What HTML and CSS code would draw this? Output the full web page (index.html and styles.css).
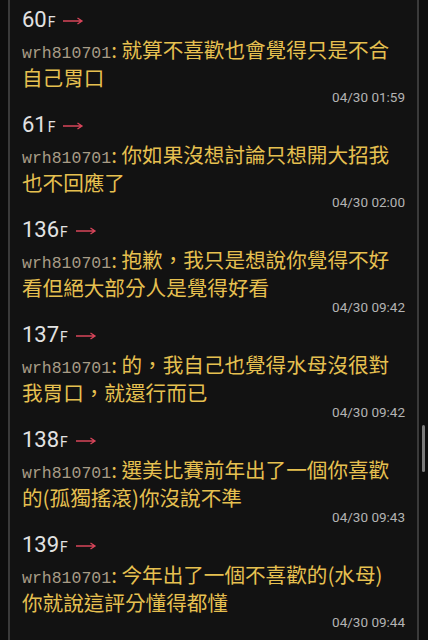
FILE: index.html
```html
<!DOCTYPE html>
<html lang="zh-Hant">
<head>
<meta charset="UTF-8">
<meta name="viewport" content="width=device-width, initial-scale=1.0">
<title>推文</title>
<link rel="stylesheet" href="styles.css">
</head>
<body>
<div class="page">
    <div class="push-list">
        <div class="push">
            <div class="floor">60<span class="floor-f">F</span><svg class="arrow" width="22" height="10" viewBox="0 0 22 10"><path d="M1 5 H20 M15.5 2 L20 5 L15.5 8" fill="none" stroke="currentColor" stroke-width="1.3"/></svg></div>
            <div class="content"><span class="user">wrh810701</span>: 就算不喜歡也會覺得只是不合自己胃口</div>
            <div class="time">04/30 01:59</div>
        </div>
        <div class="push">
            <div class="floor">61<span class="floor-f">F</span><svg class="arrow" width="22" height="10" viewBox="0 0 22 10"><path d="M1 5 H20 M15.5 2 L20 5 L15.5 8" fill="none" stroke="currentColor" stroke-width="1.3"/></svg></div>
            <div class="content"><span class="user">wrh810701</span>: 你如果沒想討論只想開大招我也不回應了</div>
            <div class="time">04/30 02:00</div>
        </div>
        <div class="push">
            <div class="floor">136<span class="floor-f">F</span><svg class="arrow" width="22" height="10" viewBox="0 0 22 10"><path d="M1 5 H20 M15.5 2 L20 5 L15.5 8" fill="none" stroke="currentColor" stroke-width="1.3"/></svg></div>
            <div class="content"><span class="user">wrh810701</span>: 抱歉，我只是想說你覺得不好看但絕大部分人是覺得好看</div>
            <div class="time">04/30 09:42</div>
        </div>
        <div class="push">
            <div class="floor">137<span class="floor-f">F</span><svg class="arrow" width="22" height="10" viewBox="0 0 22 10"><path d="M1 5 H20 M15.5 2 L20 5 L15.5 8" fill="none" stroke="currentColor" stroke-width="1.3"/></svg></div>
            <div class="content"><span class="user">wrh810701</span>: 的，我自己也覺得水母沒很對我胃口，就還行而已</div>
            <div class="time">04/30 09:42</div>
        </div>
        <div class="push">
            <div class="floor">138<span class="floor-f">F</span><svg class="arrow" width="22" height="10" viewBox="0 0 22 10"><path d="M1 5 H20 M15.5 2 L20 5 L15.5 8" fill="none" stroke="currentColor" stroke-width="1.3"/></svg></div>
            <div class="content"><span class="user">wrh810701</span>: 選美比賽前年出了一個你喜歡的(孤獨搖滾)你沒說不準</div>
            <div class="time">04/30 09:43</div>
        </div>
        <div class="push">
            <div class="floor">139<span class="floor-f">F</span><svg class="arrow" width="22" height="10" viewBox="0 0 22 10"><path d="M1 5 H20 M15.5 2 L20 5 L15.5 8" fill="none" stroke="currentColor" stroke-width="1.3"/></svg></div>
            <div class="content"><span class="user">wrh810701</span>: 今年出了一個不喜歡的(水母)你就說這評分懂得都懂</div>
            <div class="time">04/30 09:44</div>
        </div>
    </div>
    <!-- scroll thumb on the right edge -->
    <div class="scroll-thumb"></div>
</div>
</body>
</html>
```

FILE: styles.css
```css
/* Page */
html, body {
    margin: 0;
    padding: 0;
    background: #0d0d0d;
}

body {
    font-family: Roboto, "Noto Sans CJK TC", sans-serif;
    height: 640px;
    overflow: hidden;
}

.page {
    position: relative;
    height: 640px;
    padding: 0 9px 0 8px;
}

.push-list {
    height: 640px;
    background: #121212;
    border-left: 2px solid #3a3a3a;
    border-right: 2px solid #3a3a3a;
    padding: 4px 9px 0 12px;
    box-sizing: border-box;
}

/* One comment */
.push {
    height: 105px;
}

.floor {
    height: 32px;
    line-height: 32px;
    font-size: 22px;
    color: #e2e2e2;
    display: flex;
    align-items: baseline;
}

.floor-f {
    font-size: 14px;
    margin-left: 1px;
}

.arrow {
    color: #d8455a;
    margin-left: 7px;
    align-self: center;
    margin-top: 2px;
}

.content {
    font-family: "Noto Sans CJK TC", sans-serif;
    font-size: 20.6px;
    line-height: 26px;
    color: #e6c050;
    padding-right: 8px;
    height: 52px;
}

.user {
    font-family: "Liberation Mono", monospace;
    font-size: 16.5px;
    line-height: 20px;
    color: #a89c86;
}

.time {
    text-align: right;
    font-size: 13.5px;
    line-height: 18px;
    color: #b4b4b4;
    padding-right: 3px;
}

.scroll-thumb {
    position: absolute;
    right: 3px;
    top: 425px;
    width: 3px;
    height: 47px;
    border-radius: 2px;
    background: #7a7a7a;
}
```
